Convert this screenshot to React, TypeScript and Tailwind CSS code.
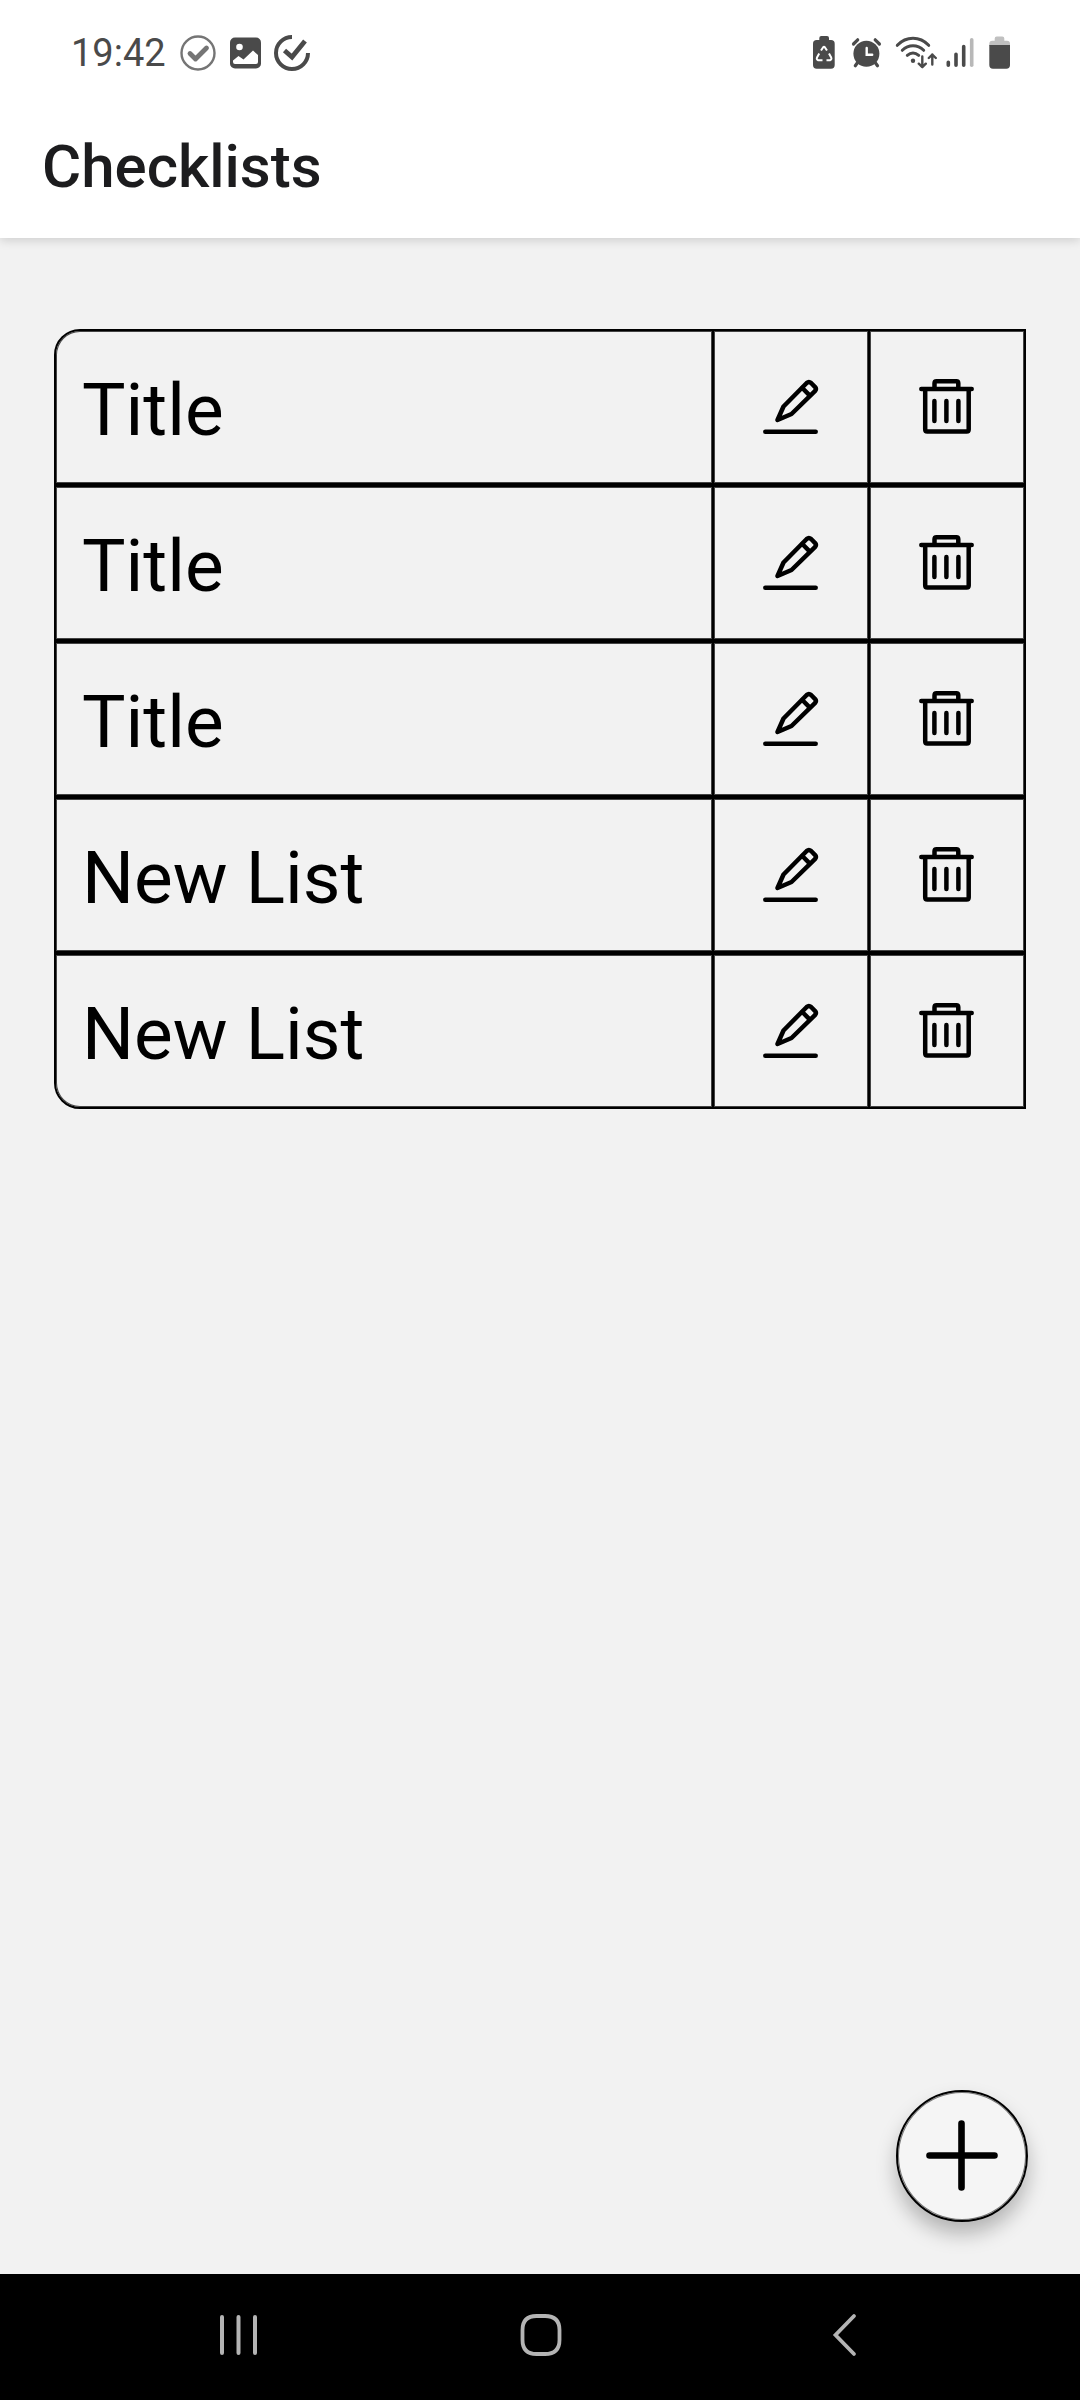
import React, { useState } from "react";

type Checklist = { id: number; name: string };

const INITIAL_LISTS: Checklist[] = [
  { id: 1, name: "Title" },
  { id: 2, name: "Title" },
  { id: 3, name: "Title" },
  { id: 4, name: "New List" },
  { id: 5, name: "New List" },
];

function StatusBar() {
  return (
    <div className="flex h-24 items-center justify-between bg-white pt-[10px] pr-[68px] pl-[71px] text-[#4a4a4a]">
      <div className="flex items-center gap-3">
        <span className="mr-[2px] text-[38px] leading-[48px]">19:42</span>
        <svg className="size-9" viewBox="0 0 36 36" fill="none" stroke="#757575" aria-hidden="true">
          <circle cx="18" cy="18" r="16.5" strokeWidth="2.4" />
          <path d="M10 18.5l5.5 5.5L26.5 13" strokeWidth="4.8" strokeLinecap="round" strokeLinejoin="round" />
        </svg>
        <svg className="h-9 w-[34px]" viewBox="0 0 34 36" aria-hidden="true">
          <rect x="2" y="2.5" width="31" height="31" rx="5" fill="currentColor" />
          <circle cx="11.5" cy="12" r="3.3" fill="#fff" />
          <path d="M5 25.5l5.5-4.5 5 3.5 9.5-9L30 20v7q0 2-2 2H7q-2 0-2-2z" fill="#fff" />
        </svg>
        <svg className="size-9" viewBox="0 0 36 36" fill="none" stroke="currentColor" aria-hidden="true">
          <path d="M18 2A16 16 0 1 0 34 18" strokeWidth="4" />
          <path d="M10.5 15.500l7.500 6.500L31 6" strokeWidth="4.800" />
        </svg>
      </div>
      <div className="flex items-center gap-2">
        <svg className="h-[34px] w-7" viewBox="0 0 28 34" aria-hidden="true">
          <path d="M8.300 4V2q0-2 2-2H16q2 0 2 2v2h2q3.700 0 3.700 3.700V29q0 3.700-3.700 3.700H5.700Q2 32.700 2 29V7.700Q2 4 5.700 4z" fill="currentColor" />
          <path d="M10 14.500l2.200-3.300q.8-1 1.600 0l2.200 3.300M18 17.500l2.200 4q.8 2-1.200 2.700h-3.500M11.500 24.200H7.200q-2-.7-1.200-2.700l2.200-4" fill="none" stroke="#fff" strokeWidth="2" strokeLinejoin="round" />
        </svg>
        <svg className="h-[34px] w-10" viewBox="0 0 40 34" fill="none" stroke="currentColor" strokeLinecap="round" aria-hidden="true">
          <circle cx="19.400" cy="17.700" r="13" fill="currentColor" stroke="none" />
          <path d="M6.500 8l4.200-4.200M28.200 3.800L32.400 8M11 26l-2.700 3.700M27.800 26l2.700 3.700" strokeWidth="3.200" />
          <path d="M19.700 12v6.700h5.500" stroke="#fff" strokeWidth="2.400" />
        </svg>
        <svg className="h-[34px] w-[42px]" viewBox="0 0 42 34" fill="none" stroke="currentColor" strokeLinecap="round" strokeLinejoin="round" aria-hidden="true">
          <path d="M2.300 9.300Q9 2.300 18 2.300T33.700 9.300M7.300 14.300Q12 9.700 18 9.700T28.700 14.300M12.300 19.300Q15 17 18 17T23.700 19.300" strokeWidth="3" />
          <circle cx="18" cy="24.700" r="2.200" fill="currentColor" stroke="none" />
          <path d="M27.300 20.500V31M23.800 27.700L27.300 31.200L30.800 27.700M37.300 28.500V18.500M33.800 22L37.300 18.500L40.800 22" strokeWidth="2.400" />
        </svg>
        <svg className="h-[34px] w-[34px]" viewBox="0 0 34 34" stroke="currentColor" strokeWidth="3.600" strokeLinecap="round" aria-hidden="true">
          <path d="M3.300 26.300V29.300M11 18.300V29.300M18.700 10.500V29.300" />
          <path d="M26.700 3.800V29.300" stroke="#b8b8b8" />
        </svg>
        <svg className="h-[34px] w-[25px]" viewBox="0 0 25 34" aria-hidden="true">
          <path d="M7.700 4.700V2.500q0-2 2-2h5.600q2 0 2 2v2.200H20q3 0 3 3V10H2.300V7.700q0-3 3-3z" fill="#c0c0c0" />
          <path d="M2.300 9H23v20q0 3.700-3.700 3.700H6q-3.700 0-3.700-3.700z" fill="currentColor" />
        </svg>
      </div>
    </div>
  );
}

function PencilIcon() {
  return (
    <svg className="size-14" viewBox="0 0 56 56" fill="none" stroke="currentColor" strokeWidth="4.500" strokeLinecap="round" strokeLinejoin="round" aria-hidden="true">
      <path d="M14.500 41L20.500 27.500L43.700 4q2.200-2 4.400 0l3.800 3.800q2 2.200 0 4.400L28.500 35z" />
      <path d="M39.300 9l7.300 7.300M2.300 52.700H52.700" />
    </svg>
  );
}

function TrashIcon() {
  return (
    <svg className="size-14" viewBox="0 0 56 56" fill="none" stroke="currentColor" strokeWidth="4.500" strokeLinecap="round" strokeLinejoin="round" aria-hidden="true">
      <path d="M2.300 10H52.700M15.500 10V4.300q0-2 2-2H37.300q2 0 2 2V10M6.200 10V50.500q0 2 2 2H47.700q2 0 2-2V10" />
      <path d="M15.400 22V42M27.400 22V42M39.400 22V42" />
    </svg>
  );
}

export default function App() {
  const [lists, setLists] = useState(INITIAL_LISTS);

  const addList = () =>
    setLists((current) => [...current, { id: Date.now(), name: "New List" }]);
  const removeList = (id: number) =>
    setLists((current) => current.filter((list) => list.id !== id));

  return (
    <div className="flex min-h-screen flex-col bg-[#f2f2f2] font-['Roboto',sans-serif] text-black">
      <header className="relative bg-white shadow-[0_2px_10px_rgba(0,0,0,0.16)]">
        <StatusBar />
        <div className="flex h-[142px] items-center px-[42px]">
          <h1 className="text-[60px] leading-[72px] font-medium text-[#1c1c1e]">Checklists</h1>
        </div>
      </header>

      <main className="relative flex-1 px-[54px] pt-[91px]">
        <ul>
          {lists.map((list) => (
            <li key={list.id} className="group/row flex h-[156px]">
              <button
                type="button"
                className="min-w-0 flex-1 border-2 border-black pt-[6px] pl-[26px] text-left text-[73px] leading-[88px] shadow-[inset_0_0_0_1px_#444] group-first/row:rounded-tl-[26px] group-last/row:rounded-bl-[26px]"
              >
                {list.name}
              </button>
              <button
                type="button"
                aria-label={`Edit ${list.name}`}
                className="-ml-[2px] flex w-[158px] items-center justify-center border-2 border-black shadow-[inset_0_0_0_1px_#444]"
              >
                <PencilIcon />
              </button>
              <button
                type="button"
                aria-label={`Delete ${list.name}`}
                onClick={() => removeList(list.id)}
                className="-ml-[2px] flex w-[158px] items-center justify-center border-2 border-black shadow-[inset_0_0_0_1px_#444]"
              >
                <TrashIcon />
              </button>
            </li>
          ))}
        </ul>

        <button
          type="button"
          aria-label="Add list"
          onClick={addList}
          className="absolute right-[52px] bottom-[52px] flex size-[132px] items-center justify-center rounded-full border-2 border-black bg-[#f5f5f5] shadow-[inset_0_0_0_1px_#777,0_12px_20px_rgba(0,0,0,0.26)]"
        >
          <svg className="size-[72px]" viewBox="0 0 72 72" stroke="currentColor" strokeWidth="6.600" strokeLinecap="round" aria-hidden="true">
            <path d="M3.500 35.500H68.500M35.500 3.500V67.500" />
          </svg>
        </button>
      </main>

      <nav aria-label="System" className="grid h-[126px] grid-cols-3 bg-black px-[86px] pb-1 text-[#b4b4b4]">
        <button type="button" aria-label="Recent apps" className="flex items-center justify-center">
          <svg className="size-11" viewBox="0 0 44 44" stroke="currentColor" strokeWidth="4" strokeLinecap="round" aria-hidden="true">
            <path d="M7 4V40M23.500 4V40M40 4V40" />
          </svg>
        </button>
        <button type="button" aria-label="Home" className="flex items-center justify-center">
          <svg className="size-11" viewBox="0 0 44 44" fill="none" stroke="currentColor" strokeWidth="3.800" aria-hidden="true">
            <path d="M23 3H27Q41.500 3 41.500 17V27Q41.500 41 27 41H18.500Q4.500 41 4.500 27V17Q4.500 3 18.500 3z" />
          </svg>
        </button>
        <button type="button" aria-label="Back" className="flex items-center justify-center">
          <svg className="size-11" viewBox="0 0 44 44" fill="none" stroke="currentColor" strokeWidth="3.800" strokeLinecap="round" strokeLinejoin="miter" aria-hidden="true">
            <path d="M33 3L14.500 22L33 41" />
          </svg>
        </button>
      </nav>
    </div>
  );
}
